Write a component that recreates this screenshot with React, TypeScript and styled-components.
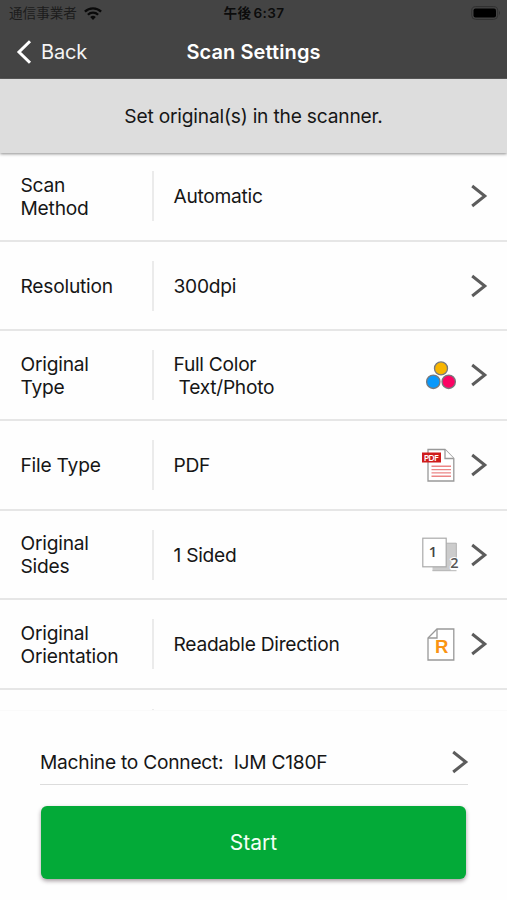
import React from 'react';
import styled, { createGlobalStyle } from 'styled-components';

const GlobalStyle = createGlobalStyle`
  * { box-sizing: border-box; }
  body {
    margin: 0;
    background: #fefefe;
    color: #161616;
    font-family: Inter, "Noto Sans CJK JP", sans-serif;
  }
`;

const Screen = styled.div`
  width: 507px;
  height: 900px;
  display: flex;
  flex-direction: column;
  overflow: hidden;
`;

const Header = styled.header`
  flex: none;
  height: 79px;
  background: #444;
  border-bottom: 1px solid #5c5c5c;
`;

const StatusBar = styled.div`
  height: 26px;
  display: grid;
  grid-template-columns: 1fr auto 1fr;
  align-items: center;
  padding: 0 6px 0 9px;
`;

const Carrier = styled.div`
  display: flex;
  align-items: center;
  gap: 7px;
  font-size: 13.6px;
  line-height: 20px;
  color: #1c1c1c;
`;

const Clock = styled.div`
  display: flex;
  gap: 2px;
  margin-right: 2px;
  font-size: 13.6px;
  line-height: 20px;
  font-weight: 600;
  color: #0c0c0c;
  letter-spacing: 0.4px;
`;

const BatterySlot = styled.div`
  display: flex;
  justify-content: flex-end;
`;

const NavBar = styled.div`
  height: 52px;
  display: grid;
  grid-template-columns: 1fr auto 1fr;
  align-items: center;
  padding: 0 16px;
  color: #fff;
`;

const BackButton = styled.button`
  display: flex;
  align-items: center;
  gap: 9px;
  padding: 0;
  border: 0;
  background: none;
  color: #f4f4f4;
  font: 400 20px/24px Inter, sans-serif;
  letter-spacing: -0.2px;
`;

const Title = styled.h1`
  margin: 0;
  font-size: 20px;
  line-height: 24px;
  font-weight: 600;
  letter-spacing: 0.1px;
`;

const Banner = styled.div`
  flex: none;
  position: relative;
  z-index: 1;
  height: 74px;
  display: flex;
  align-items: center;
  justify-content: center;
  background: #ddd;
  box-shadow: 0 1px 3px rgba(0, 0, 0, 0.45);
  font-size: 19.2px;
  letter-spacing: -0.2px;
`;

const List = styled.main`
  flex: none;
  height: 557px;
  overflow: hidden;
`;

const Rows = styled.div`
  margin-top: -0.8px;
`;

const Row = styled.div`
  height: 89.6px;
  display: flex;
  align-items: center;
  padding: 0.6px 20px 0 20.5px;
  border-bottom: 2px solid #e6e6e6;
  font-size: 19.2px;
  line-height: 23.4px;
`;

const Label = styled.div`
  width: 131.5px;
  padding-top: 1.4px;
  white-space: pre;
  letter-spacing: -0.22px;
`;

const Divider = styled.div`
  width: 2px;
  height: 50px;
  background: #ebebeb;
`;

const Value = styled.div`
  flex: 1;
  padding: 1.4px 0 0 19.5px;
  white-space: pre;
  letter-spacing: -0.28px;
`;

const IconSlot = styled.div`
  width: 36px;
  height: 36px;
  margin-right: 12px;
`;

const Footer = styled.footer`
  flex: 1;
  border-top: 1px solid #fafafa;
  padding: 28px 39px 0 40px;
`;

const MachineRow = styled.div`
  height: 46px;
  display: flex;
  align-items: center;
  justify-content: space-between;
  border-bottom: 1px solid #dcdcdc;
  font-size: 19.2px;
  letter-spacing: -0.25px;
  white-space: pre;
`;

const StartButton = styled.button`
  display: block;
  width: 425px;
  height: 73px;
  margin: 21px 0 0 1px;
  border: 0;
  border-radius: 6px;
  background: #03aa38;
  box-shadow: 0 2px 4px rgba(40, 20, 30, 0.42);
  color: #f4fff6;
  font: 400 21px/26px Inter, sans-serif;
  letter-spacing: 0;
`;

const Icon = styled.svg`
  display: block;
  overflow: visible;
  flex: none;
`;

const Chevron = () => (
  <Icon width="17" height="24" viewBox="0 0 17 24" fill="none" stroke="#5c5c5c" strokeWidth="3">
    <path d="M2.2 2 14.8 12 2.2 22" />
  </Icon>
);

const BackChevron = () => (
  <Icon width="16" height="24" viewBox="0 0 16 24" fill="none" stroke="#fff" strokeWidth="3">
    <path d="M14 1.2 3 12 14 22.8" />
  </Icon>
);

const Wifi = () => (
  <Icon width="18" height="13" viewBox="0 0 18 13" fill="none" stroke="#0a0a0a" strokeWidth="2.3">
    <path d="M.9 4.6a11.6 11.6 0 0 1 16.2 0M3.9 7.8a7.2 7.2 0 0 1 10.2 0" />
    <path d="M6.2 10a4 4 0 0 1 5.6 0L9 12.9Z" fill="#0a0a0a" stroke="none" />
  </Icon>
);

const Battery = () => (
  <Icon width="30" height="14" viewBox="0 0 30 14">
    <rect x=".7" y=".6" width="26" height="12.8" rx="4" fill="none" stroke="#303030" />
    <rect x="2.5" y="2.5" width="22.5" height="9" rx="2" fill="#000" />
    <path d="M28 4.8q2 2.2 0 4.4Z" fill="#303030" />
  </Icon>
);

const ColorIcon = () => (
  <Icon width="36" height="36" viewBox="0 0 36 36" stroke="#77797c" strokeWidth="1.3">
    <circle cx="19" cy="11.4" r="6.5" fill="#f8b500" />
    <circle cx="11.3" cy="24.8" r="6.7" fill="#0798fb" />
    <circle cx="26.7" cy="24.8" r="6.7" fill="#fb0364" />
  </Icon>
);

const PdfIcon = () => (
  <Icon width="36" height="36" viewBox="0 0 36 36">
    <path d="M6 2.5H23L31.8 11.5V34H6Z" fill="#fff" stroke="#999" strokeWidth="1.3" />
    <path d="M23 2.5V11.5H31.8" fill="#fff" stroke="#999" strokeWidth="1.3" />
    <path d="M9.5 19.3H29M9.5 22.6H29M9.5 25.9H29M9.5 29.2H29" stroke="#ec8585" strokeWidth="1.4" />
    <rect x="0" y="5.5" width="19" height="10" fill="#cf1b1b" />
    <text x="9.3" y="13.8" fill="#fff" fontSize="9" fontWeight="600" textAnchor="middle" fontFamily="Open Sans, sans-serif" textLength="15">PDF</text>
  </Icon>
);

const SidesIcon = () => (
  <Icon width="36" height="36" viewBox="0 0 36 36">
    <path d="M10.5 6H34.7V21.5H30L28.5 34H10.5Z" fill="#ccc" />
    <path d="M24 6.2H34.3V21M10.5 33.7H34.5" fill="none" stroke="#b5b5b5" />
    <rect x=".8" y="1.2" width="23.4" height="28.6" fill="#fff" stroke="#aaa" strokeWidth="1.2" />
    <text x="11" y="20" fill="#444" fontSize="14.5" textAnchor="middle" fontFamily="Open Sans, sans-serif" fontWeight="600">1</text>
    <text x="32.5" y="31" fill="#555" fontSize="14.5" stroke="#fff" strokeWidth="2" paintOrder="stroke" textAnchor="middle" fontFamily="Open Sans, sans-serif" fontWeight="600">2</text>
  </Icon>
);

const OrientationIcon = () => (
  <Icon width="36" height="36" viewBox="0 0 36 36">
    <path d="M15 3H31.8V34H6V12Z" fill="#fff" stroke="#999" strokeWidth="1.3" />
    <path d="M15 3V12H6" fill="none" stroke="#999" strokeWidth="1.3" />
    <text x="19.8" y="26.5" fill="#fa9413" fontSize="18.5" fontWeight="700" textAnchor="middle" fontFamily="Liberation Sans, sans-serif">R</text>
  </Icon>
);

type Setting = {
  label: string;
  value: string;
  icon?: React.ReactNode;
};

const settings: Setting[] = [
  { label: 'Scan\nMethod', value: 'Automatic' },
  { label: 'Resolution', value: '300dpi' },
  { label: 'Original\nType', value: 'Full Color\n Text/Photo', icon: <ColorIcon /> },
  { label: 'File Type', value: 'PDF', icon: <PdfIcon /> },
  { label: 'Original\nSides', value: '1 Sided', icon: <SidesIcon /> },
  { label: 'Original\nOrientation', value: 'Readable Direction', icon: <OrientationIcon /> },
];

export default function App() {
  return (
    <>
      <GlobalStyle />
      <Screen>
        <Header>
          <StatusBar>
            <Carrier>
              <span>通信事業者</span>
              <Wifi />
            </Carrier>
            <Clock>
              <span>午後</span>
              <span>6:37</span>
            </Clock>
            <BatterySlot>
              <Battery />
            </BatterySlot>
          </StatusBar>
          <NavBar>
            <BackButton>
              <BackChevron />
              Back
            </BackButton>
            <Title>Scan Settings</Title>
          </NavBar>
        </Header>
        <Banner>Set original(s) in the scanner.</Banner>
        <List>
          <Rows>
            {settings.map((s) => (
              <Row key={s.label}>
                <Label>{s.label}</Label>
                <Divider />
                <Value>{s.value}</Value>
                {s.icon && <IconSlot>{s.icon}</IconSlot>}
                <Chevron />
              </Row>
            ))}
            <Row>
              <Label />
              <Divider />
            </Row>
          </Rows>
        </List>
        <Footer>
          <MachineRow>
            <span>{'Machine to Connect:  IJM C180F'}</span>
            <Chevron />
          </MachineRow>
          <StartButton>Start</StartButton>
        </Footer>
      </Screen>
    </>
  );
}
